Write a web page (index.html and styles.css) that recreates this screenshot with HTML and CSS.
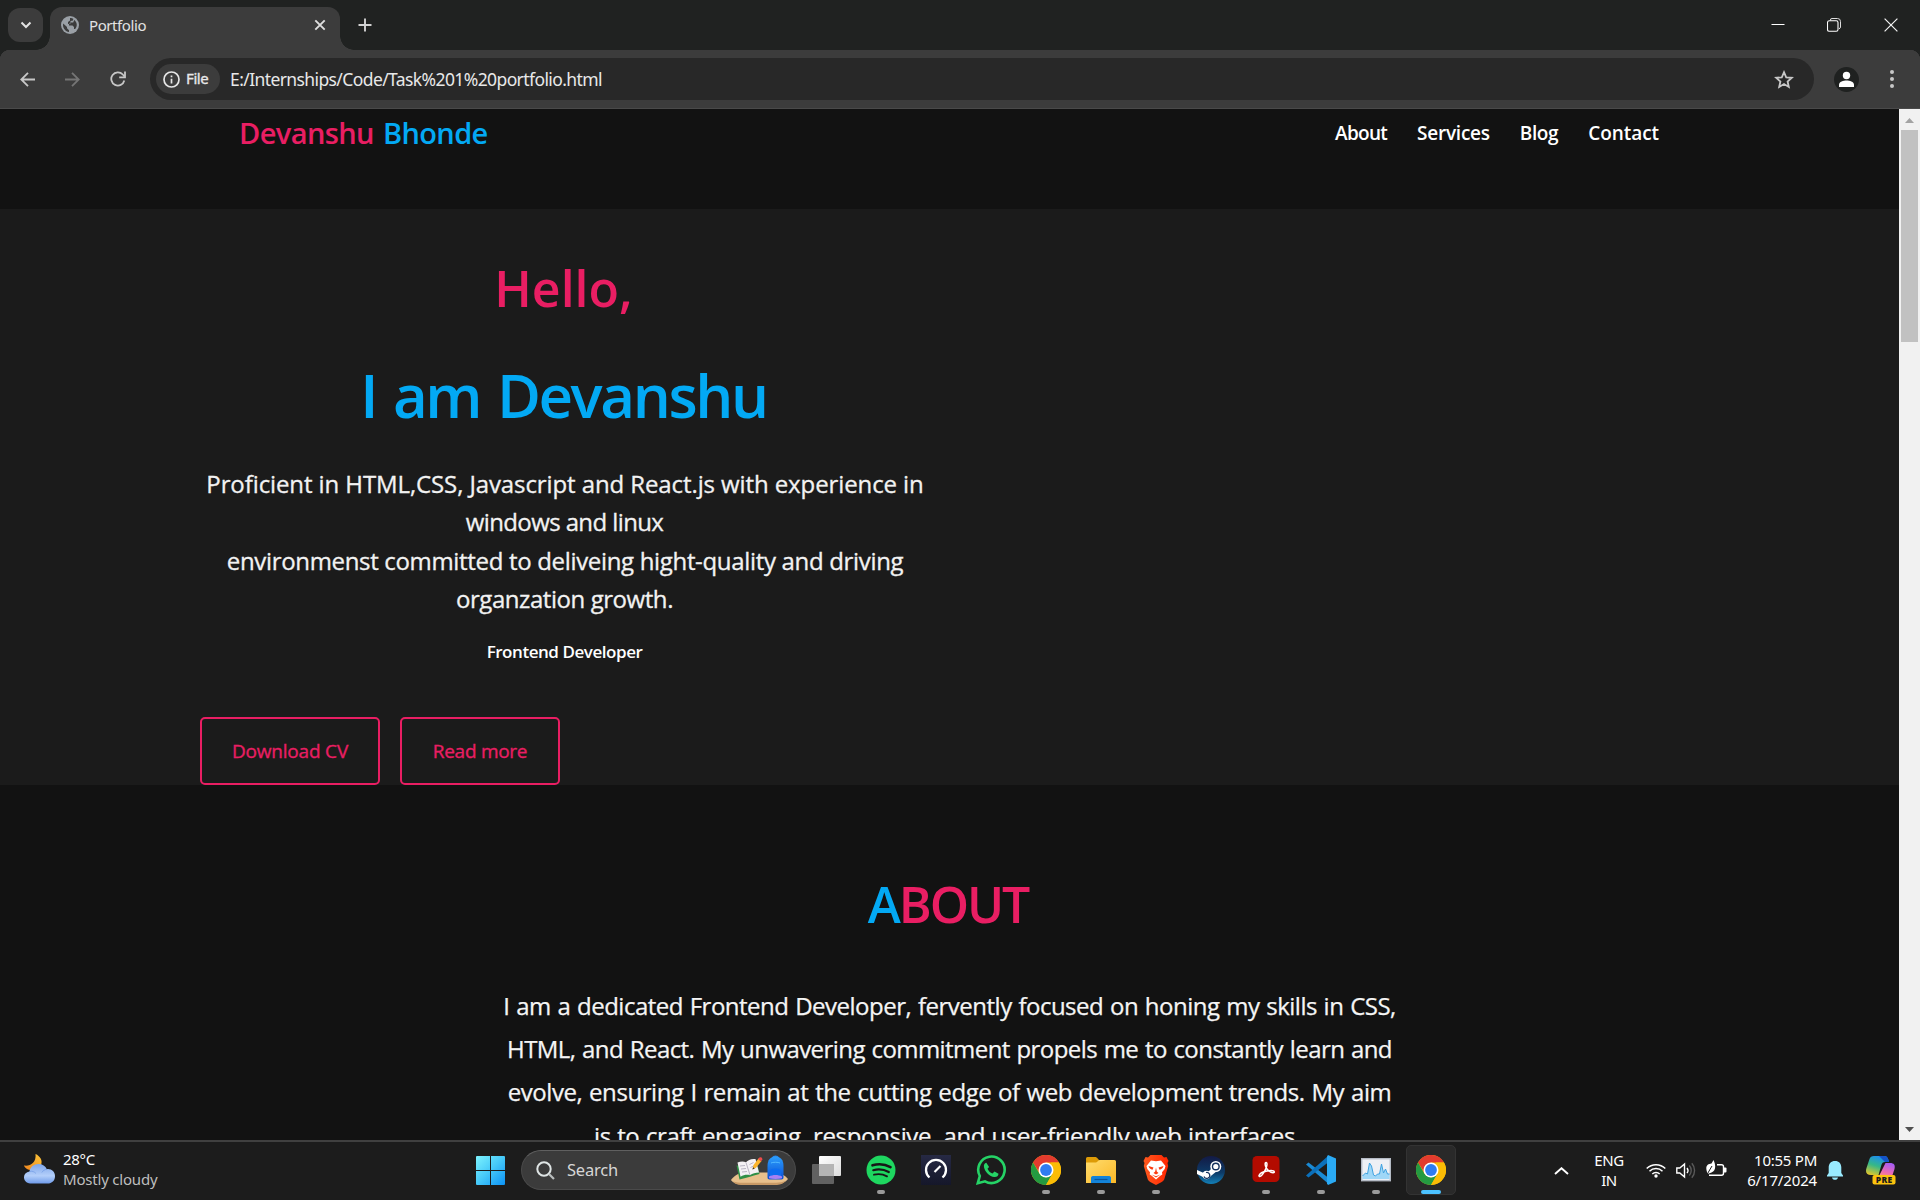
FILE: index.html
```html
<!DOCTYPE html>
<html lang="en">
<head>
<meta charset="utf-8">
<title>Portfolio</title>
<link rel="stylesheet" href="styles.css">
</head>
<body>
<div class="screen">
  <div class="tabstrip">
    <div class="tab-search"><svg width="12" height="8" viewBox="0 0 12 8"><path d="M1.500 1.500 6 6l4.500-4.500" fill="none" stroke="#e3e3e3" stroke-width="2"/></svg></div>
    <div class="tab">
      <svg class="favicon" width="18" height="18" viewBox="0 0 18 18"><circle cx="9" cy="9" r="9" fill="#9aa0a6"/><path d="M2.200 7.500 6 11v1.200l2 2v1.800C4.500 15.400 2 12.500 2 9zM9 2c1.500 0 2.500.3 3.300.8L12 4.500 9.500 5v1.800L8 8v1.500h3.500L13 11v2h1.200C17 9.500 15.800 6 13.200 4l-1 2.500H10L9 8H7V6l2-1.500z" fill="#3c3c3c"/></svg>
      <span class="tab-title">Portfolio</span>
      <svg class="tab-close" width="12" height="12" viewBox="0 0 12 12"><path d="M1.300 1.300l9.400 9.400M10.700 1.300l-9.400 9.400" stroke="#dedede" stroke-width="1.900"/></svg>
    </div>
    <svg class="new-tab" width="14" height="14" viewBox="0 0 14 14"><path d="M7 .5v13M.5 7h13" stroke="#d2d2d2" stroke-width="1.900"/></svg>
    <div class="window-controls">
      <svg width="14" height="14" viewBox="0 0 14 14"><path d="M.5 6.500h13" stroke="#fff"/></svg>
      <svg width="14" height="14" viewBox="0 0 14 14"><path d="M3.500 2.500v-.2A1.500 1.500 0 0 1 5 .5h5.500a3 3 0 0 1 3 3V9a2 2 0 0 1-1.500 1.800" fill="none" stroke="#ddd"/><rect x=".5" y="2.800" width="10.500" height="10.500" rx="1.800" fill="none" stroke="#fff" stroke-width="1.100"/></svg>
      <svg width="14" height="14" viewBox="0 0 14 14"><path d="M.6.600l12.800 12.800M13.400.6.600 13.400" stroke="#f2f2f2" stroke-width="1.200"/></svg>
    </div>
  </div>

  <div class="toolbar">
    <svg class="nav-back" width="15" height="15" viewBox="0 0 15 15"><path d="M15 7.500H1.500M8 .8 1.300 7.500 8 14.200" fill="none" stroke="#c7c7c7" stroke-width="1.800"/></svg>
    <svg class="nav-forward" width="15" height="15" viewBox="0 0 15 15"><path d="M0 7.500h13.500M7 .8l6.700 6.700L7 14.200" fill="none" stroke="#757575" stroke-width="1.800"/></svg>
    <svg class="nav-reload" width="16" height="16" viewBox="0 0 16 16"><path d="M14.300 9.500A6.600 6.600 0 1 1 12.800 3.500L14.500 5.300" fill="none" stroke="#c7c7c7" stroke-width="1.800"/><path d="M15 .4v6H9.200" fill="none" stroke="#c7c7c7" stroke-width="1.800"/></svg>
    <div class="omnibox">
      <div class="chip">
        <svg width="17" height="17" viewBox="0 0 17 17"><circle cx="8.500" cy="8.500" r="7.500" fill="none" stroke="#e6e6e6" stroke-width="1.700"/><path d="M8.500 7.700v4.800M8.500 4.400v1.800" stroke="#e6e6e6" stroke-width="1.700"/></svg>
        <span class="chip-label">File</span>
      </div>
      <span class="url">E:/Internships/Code/Task%201%20portfolio.html</span>
      <svg class="star" width="20" height="19" viewBox="0 0 20 19"><path d="M10 2.200l2.200 5.100 5.600.5-4.200 3.700 1.200 5.500L10 14.100 5.200 17l1.200-5.500L2.200 7.800l5.600-.5z" fill="none" stroke="#c7c7c7" stroke-width="1.800"/></svg>
    </div>
    <svg class="profile" width="25" height="25" viewBox="0 0 25 25"><circle cx="12.500" cy="12.500" r="12.500" fill="#1f2120"/><circle cx="12.500" cy="8.500" r="3.700" fill="#fff"/><path d="M5 20v-2.200c0-3 4.500-4.200 7.500-4.200s7.500 1.200 7.500 4.200V20z" fill="#fff"/></svg>
    <svg class="menu-dots" width="4" height="18" viewBox="0 0 4 18"><g fill="#c7c7c7"><circle cx="2" cy="2" r="2"/><circle cx="2" cy="9" r="2"/><circle cx="2" cy="16" r="2"/></g></svg>
  </div>

  <div class="viewport">
    <main class="page">
      <header class="site-header">
        <div class="logo"><span class="logo-first">Devanshu</span><span class="logo-last">Bhonde</span></div>
        <nav class="menu"><a class="m-about">About</a><a class="m-services">Services</a><a class="m-blog">Blog</a><a class="m-contact">Contact</a></nav>
      </header>
      <section class="hero">
        <div class="hero-text">
          <h2 class="hello">Hello,</h2>
          <h1 class="name">I am Devanshu</h1>
          <p class="intro">
            <span class="line i1">Proficient in HTML,CSS, Javascript and React.js with experience in</span>
            <span class="line i2">windows and linux</span>
            <span class="line i3">environmenst committed to deliveing hight-quality and driving</span>
            <span class="line i4">organzation growth.</span>
          </p>
          <p class="role">Frontend Developer</p>
        </div>
        <div class="buttons"><a class="btn btn-cv">Download CV</a><a class="btn btn-more">Read more</a></div>
      </section>
      <section class="about">
        <h2 class="about-title"><span class="about-a">A</span>BOUT</h2>
        <p class="about-text">
          <span class="line a1">I am a dedicated Frontend Developer, fervently focused on honing my skills in CSS,</span>
          <span class="line a2">HTML, and React. My unwavering commitment propels me to constantly learn and</span>
          <span class="line a3">evolve, ensuring I remain at the cutting edge of web development trends. My aim</span>
          <span class="line a4">is to craft engaging, responsive, and user-friendly web interfaces.</span>
        </p>
      </section>
    </main>
    <div class="scrollbar">
      <svg width="9" height="5" viewBox="0 0 9 5"><path d="M0 5 4.500 0 9 5z" fill="#a3a3a3"/></svg>
      <div class="thumb"></div>
      <svg class="arrow-down" width="9" height="5" viewBox="0 0 9 5"><path d="M0 0h9L4.500 5z" fill="#505050"/></svg>
    </div>
  </div>

  <div class="taskbar">
    <div class="weather">
      <svg width="31" height="30" viewBox="0 0 31 30">
        <defs>
          <linearGradient id="moon" x1="1" y1="0" x2="0" y2="1"><stop offset="0" stop-color="#fcc63a"/><stop offset="1" stop-color="#f0851e"/></linearGradient>
          <linearGradient id="cloud" x1="0" y1="0" x2="0" y2="1"><stop offset="0" stop-color="#7ea6ea"/><stop offset=".6" stop-color="#b3cffa"/><stop offset="1" stop-color="#6f9bea"/></linearGradient>
        </defs>
        <path d="M11.500 0C16 2 19 6.500 17 11c-2 4.500-8 6.500-13 4.500-2-.8-3.500-2.300-4-4C6 12.500 12.500 9 11.500 0z" fill="url(#moon)"/>
        <path d="M6.500 29.500a6 6 0 0 1-1-12C6 13 10 10 14.500 10c4 0 7 2 8.300 5.200 4.500-.7 8.200 2.300 8.200 7 0 4.300-3 7.300-7.500 7.300z" fill="url(#cloud)"/>
        <path d="M5.500 17.500c2.500-.8 5 .3 6.500 2M22.800 15.200c-2 .3-4 1.500-5 3.300" fill="none" stroke="#5f8ee0" stroke-opacity=".5"/>
      </svg>
      <div class="weather-text"><span class="temp">28°C</span><span class="cond">Mostly cloudy</span></div>
    </div>
    <svg class="start" width="29" height="29" viewBox="0 0 29 29">
      <defs><linearGradient id="win" x1="0" y1="0" x2="1" y2="1"><stop offset="0" stop-color="#7df3fd"/><stop offset=".5" stop-color="#45c8f9"/><stop offset="1" stop-color="#0c92f5"/></linearGradient></defs>
      <path d="M1 0h13v14H0V1a1 1 0 0 1 1-1zM15 0h13a1 1 0 0 1 1 1v13H15zM0 15h14v14H1a1 1 0 0 1-1-1zM15 15h14v13a1 1 0 0 1-1 1H15z" fill="url(#win)"/>
    </svg>
    <div class="search">
      <svg width="19" height="19" viewBox="0 0 19 19"><circle cx="8" cy="8" r="6.700" fill="none" stroke="#dfe5e5" stroke-width="2"/><path d="M13 13l5 5" stroke="#b9bdbd" stroke-width="2.200"/></svg>
      <span class="search-label">Search</span>
      <svg class="search-art" width="57" height="31" viewBox="0 0 57 31">
        <defs><linearGradient id="bag" x1="0" y1="0" x2="0" y2="1"><stop offset="0" stop-color="#2b9dfb"/><stop offset="1" stop-color="#0b4fd6"/></linearGradient></defs>
        <path d="M0 26c3-4 7-7 13-7.500h30c7 0 11 3 14 6.500-2 3-6 4.500-11 5H9c-5 0-7-1.500-9-4z" fill="#e8c08c"/>
        <path d="M2 27.500c3 1 6 1.300 10 1.300h33c4 0 7-.8 10-2-2 2.200-5 4.200-9 4.200H10c-4 0-6-1.500-8-3.500z" fill="#c99a66"/>
        <path d="M5.500 11.500 8.500 25.500c7-1.500 12-3.500 20-5.500L27 13z" fill="#2f8f46"/>
        <path d="M6.500 8.500c3-1.300 6-1.500 8.500-.3 2-2.300 5-3.700 9.500-3.200l3.500 13.500c-3.500 0-6.500 1-9 2.700-3-1-6-.5-9.500 1.500z" fill="#f3f1f4"/>
        <path d="M15 8.500 19 21M9 12l5-.5M10 15l5-.5M11 18l5-.5M18.500 10.500l4-2M19.500 13.500l4-2" stroke="#a9a4b6" stroke-width=".8" fill="none"/>
        <path d="M21.500 15.500 22.500 11l5-6.500 3 2.500-5.500 6.800z" fill="#fbb52b"/><path d="M27 5l1.800-1.800a2 2 0 0 1 2.500 2L30 7.500z" fill="#ee4b4b"/><path d="M21.500 15.500l.5-2.300 1.800 1.300z" fill="#333"/>
        <path d="M41.500 4a3.500 3.500 0 0 1 6 0" fill="none" stroke="#2a87e8" stroke-width="1.800"/>
        <path d="M36.500 12c0-6 3-9.500 8-9.500s8 3.500 8 9.500v11.500c0 1.200-.8 2-2 2h-12c-1.200 0-2-.8-2-2z" fill="url(#bag)"/>
        <path d="M39 24.500V18c0-2.500 2-3.500 5.500-3.500S50 15.500 50 18v6.500z" fill="#0d6df0"/><path d="M38 22.500c4-2 9-2 13 0v1.800c-4 1-9 1-13 0z" fill="#a781f3"/><path d="M40 9c1.500-1 7.500-1 9 0" stroke="#53b9ff" fill="none"/>
      </svg>
    </div>

    <div class="apps">
      <div class="app"><svg width="30" height="30" viewBox="0 0 30 30"><defs><linearGradient id="tv" x1="0" y1="0" x2="1" y2="1"><stop offset="0" stop-color="#fff"/><stop offset="1" stop-color="#dcdcdc"/></linearGradient></defs><rect x="8" y="1" width="22" height="20" rx="1" fill="url(#tv)"/><rect x="1" y="9" width="22" height="20" rx="1" fill="#6d6d6d" fill-opacity=".85"/><path d="M8 9h15v12H8z" fill="#b4b4b4"/></svg></div>
      <div class="app running"><svg width="30" height="30" viewBox="0 0 30 30"><circle cx="15" cy="15" r="14.500" fill="#1ed760"/><g fill="none" stroke="#171717" stroke-linecap="round"><path d="M6.500 10.300c6-1.700 12.500-1.200 18 1.800" stroke-width="2.600"/><path d="M7.300 15.200c5-1.400 10.700-.8 15.500 1.800" stroke-width="2.200"/><path d="M8 19.700c4.500-1.100 9-.6 13 1.600" stroke-width="1.900"/></g></svg></div>
      <div class="app"><svg width="30" height="30" viewBox="0 0 30 30"><defs><linearGradient id="spd" x1="0" y1="0" x2="0" y2="1"><stop offset="0" stop-color="#262944"/><stop offset="1" stop-color="#15172a"/></linearGradient></defs><path d="M0 0h30v30H0z" fill="url(#spd)"/><path d="M8.500 22.500a10 10 0 1 1 13 0" fill="none" stroke="#fff" stroke-width="2.300"/><path d="M13.500 17 19.500 11" stroke="#fff" stroke-width="2.200"/></svg></div>
      <div class="app"><svg width="30" height="30" viewBox="0 0 30 30"><path d="M1.800 28.200l2-7.200A13.200 13.200 0 1 1 9 26.300z" fill="none" stroke="#25d366" stroke-width="2.600"/><path d="M10.300 7.800c-1.800.3-2.800 2.200-2.300 4.400 1 4.700 5.600 9.200 10.300 9.800 2.300.2 4.200-1 4.200-3.200l-4-2.200-2 2c-2.300-.9-4-2.600-5-4.800l1.600-1.800z" fill="#25d366"/></svg></div>
      <div class="app running"><svg width="30" height="30" viewBox="0 0 30 30"><use href="#chrome"/></svg></div>
      <div class="app running"><svg width="30" height="30" viewBox="0 0 30 30"><defs><linearGradient id="fold" x1="0" y1="0" x2="1" y2="1"><stop offset="0" stop-color="#ffdc6e"/><stop offset="1" stop-color="#fbb826"/></linearGradient></defs><path d="M0 3.500A1.500 1.500 0 0 1 1.500 2H9c1 0 1.500.3 2 .8L13 5v6H0z" fill="#dd9b07"/><path d="M0 7.500h10c1.500 0 2-2.500 3.500-2.500h15A1.500 1.500 0 0 1 30 6.500V28H0z" fill="url(#fold)"/><path d="M5 28v-5.500A1.800 1.800 0 0 1 6.800 21h16.500a1.800 1.800 0 0 1 1.700 1.500V28z" fill="#1383d9"/><path d="M8.500 24.500h13" stroke="#0a559c" stroke-width="1.200"/></svg></div>
      <div class="app running"><svg width="30" height="30" viewBox="0 0 30 30"><defs><linearGradient id="brv" x1="0" y1="0" x2="1" y2="0"><stop offset="0" stop-color="#ff5a1f"/><stop offset="1" stop-color="#ff2400"/></linearGradient></defs><path d="M9.500 0h11l2.500 2.500 2.500-.5 2 4-1 2 .7 3-4 13.500c-1 2-4 3.500-8.200 5.500-4.200-2-7.200-3.500-8.200-5.500L2.800 11l.7-3-1-2 2-4 2.500.5z" fill="url(#brv)"/><path d="M10 5.500l5 .8 5-.8 4.500 5.500-.8 3-2.700 3.300.3 2.200-2 1.200L15 24.500l-4.300-3.800-2-1.200.3-2.200L6.300 14l-.8-3z" fill="#fff"/><path d="M7.500 11l5 1.500-1 2.300c-2-.3-3.300-1.800-4-3.800zM22.500 11l-5 1.500 1 2.300c2-.3 3.300-1.800 4-3.800zM15 12.500l.8 4 1.700 1.500-2.500 1.500-2.500-1.500 1.700-1.500zM10.500 19.500l4.500 1.700 4.500-1.700L15 22.500z" fill="#fb3c10"/></svg></div>
      <div class="app"><svg width="30" height="30" viewBox="0 0 30 30"><defs><linearGradient id="stm" x1="0" y1="0" x2="0" y2="1"><stop offset="0" stop-color="#131a45"/><stop offset=".6" stop-color="#0d3b68"/><stop offset="1" stop-color="#1380b8"/></linearGradient></defs><circle cx="15" cy="15" r="14" fill="url(#stm)"/><path d="M1 15l9 4 6-6 5 3-8 6.500-4 .5-8-4z" fill="#fff"/><circle cx="19.800" cy="11.500" r="5.500" fill="#fff"/><circle cx="19.800" cy="11.500" r="3.300" fill="#fff" stroke="#16325e" stroke-width="1.400"/><circle cx="10.500" cy="20" r="4.200" fill="#fff"/><path d="M8 21.500a3 3 0 1 0 2-4" fill="none" stroke="#16325e" stroke-width="1.200"/></svg></div>
      <div class="app running"><svg width="30" height="30" viewBox="0 0 30 30"><rect x="1.500" y="1" width="27" height="26" rx="4.500" fill="#b30b00"/><path d="M8 20.500c.8-2 4-3.800 8-4.500s7-.3 7.300.8c.3 1-1.800 1.500-4.300-.2-3-2-5-5.500-4.800-8 .1-1.800 1.800-1.500 1.800.3 0 2.700-2 7-4.500 10.500-1.500 2-3.500 2.800-3.500 1.100z" fill="none" stroke="#fff" stroke-width="1.500"/></svg></div>
      <div class="app running"><svg width="30" height="30" viewBox="0 0 30 30"><path d="M0 9.500 2.500 7.500 22 22.500v6z" fill="#1a8ad4"/><path d="M0 20.500l2.500 2L22 7.500V1z" fill="#0b70bb"/><path d="M22 0l8 3.500v23L22 30l-1-1.500V1.500z" fill="#2aaaf4"/></svg></div>
      <div class="app running"><svg width="30" height="30" viewBox="0 0 30 30"><rect x=".7" y="3.700" width="28.600" height="22" fill="#eef0f5" stroke="#b4bac4" stroke-width="1.400"/><path d="M1.500 21l3-3 2 1 2-11 2 3 2 9 2 1 2-2h2l2-10 2 9 2-4 2 5h2v5h-27z" fill="#9fd7f7"/><path d="M1.500 21l3-3 2 1 2-11 2 3 2 9 2 1 2-2h2l2-10 2 9 2-4 2 5h2" fill="none" stroke="#3fa2e0"/></svg></div>
      <div class="app active"><svg width="30" height="30" viewBox="0 0 30 30"><g id="chrome"><circle cx="15" cy="15" r="15" fill="#fbbc05"/><path d="M2 7.500A15 15 0 0 1 28 7.500H15L9 18.500z" fill="#e33b2e"/><path d="M2 7.500A15 15 0 0 0 15 30l6.500-11.200-6.500 3.700-6.500-3.700z" fill="#249a41"/><path d="M28 7.500A15 15 0 0 1 15 30l6.500-11.200L20 7.500z" fill="#fbbc05"/><circle cx="15" cy="15" r="7.500" fill="#fff"/><circle cx="15" cy="15" r="5.900" fill="#2f7cf0"/></g></svg></div>
    </div>

    <div class="tray">
      <svg class="t-chev" width="15" height="8" viewBox="0 0 15 8"><path d="M1 7l6.500-5.800L14 7" fill="none" stroke="#fff" stroke-width="1.900"/></svg>
      <div class="lang"><span class="t-eng">ENG</span><span class="t-in">IN</span></div>
      <svg class="t-wifi" width="20" height="15" viewBox="0 0 20 15"><g fill="none" stroke="#fff" stroke-width="1.500"><path d="M.7 5.500a13.200 13.200 0 0 1 18.600 0"/><path d="M3.500 8.300a9.200 9.200 0 0 1 13 0"/><path d="M6.300 11a5.200 5.200 0 0 1 7.400 0"/></g><circle cx="10" cy="13" r="1.700" fill="#fff"/></svg>
      <svg class="t-vol" width="20" height="17" viewBox="0 0 20 17"><path d="M.8 6v5h3l4.700 4V2L3.800 6z" fill="none" stroke="#fff" stroke-width="1.400"/><path d="M11 6a4 4 0 0 1 0 5" fill="none" stroke="#fff" stroke-width="1.400"/><path d="M13.300 3.500a7.500 7.500 0 0 1 0 10M15.800 1.200a11 11 0 0 1 0 14.600" fill="none" stroke="#5a5a5a" stroke-width="1.400"/></svg>
      <svg class="t-bat" width="21" height="18" viewBox="0 0 21 18"><path d="M11 4.700h4.500a2 2 0 0 1 2 2v6.600a2 2 0 0 1-2 2H3" fill="none" stroke="#fff" stroke-width="1.400"/><path d="M18 7.500h1.500a1 1 0 0 1 1 1v3a1 1 0 0 1-1 1H18z" fill="#fff"/><path d="M1 12C-1 6 1.500 4 5.500 3.500L7.500 0c2.500 5 2.500 11-2 12.500L1.500 14z" fill="#fff"/><path d="M1 14.500 6 6" stroke="#1c1c1c"/></svg>
      <div class="clock"><span class="t-time">10:55 PM</span><span class="t-date">6/17/2024</span></div>
      <svg class="t-bell" width="16" height="19" viewBox="0 0 16 19"><path d="M8 0c4 0 6.300 2.700 6.300 6.500V12l1.700 2.500v1H0v-1L1.700 12V6.500C1.700 2.700 4 0 8 0zM5 16.500h6c-.3 1.500-1.500 2.300-3 2.300s-2.700-.8-3-2.300z" fill="#99ebff"/></svg>
      <svg class="t-copilot" width="30" height="29" viewBox="0 0 30 29">
        <defs>
          <linearGradient id="cpa" x1=".6" y1="0" x2=".2" y2="1"><stop offset="0" stop-color="#1b8cf2"/><stop offset=".5" stop-color="#35b888"/><stop offset="1" stop-color="#e3c72b"/></linearGradient>
          <linearGradient id="cpb" x1=".7" y1="0" x2=".3" y2="1"><stop offset="0" stop-color="#a55cf5"/><stop offset=".6" stop-color="#ee6bb0"/><stop offset="1" stop-color="#ff9a6b"/></linearGradient>
        </defs>
        <path d="M8 0h10c2.500 0 3.500 1 4.300 3.500L23 6h-4c-2 0-3 1-3.600 3L12.500 19H5c-4 0-6-2-4.500-7L3.500 3C4.200 1 5.500 0 8 0z" fill="url(#cpa)"/>
        <path d="M13 0h5c2.500 0 3.500 1 4.300 3.500L23 6h-4l-2-2z" fill="#1453c8"/>
        <path d="M19.500 7H24c4 0 5.500 2 4.500 6l-3 9H10l3-2z" fill="url(#cpb)"/>
        <rect x="6.500" y="19" width="23" height="9.500" rx="2" fill="#fcc30e"/>
        <text x="18.100" y="26.800" text-anchor="middle" class="pre">PRE</text>
      </svg>
    </div>
  </div>
</div>
</body>
</html>
```
FILE: styles.css
```css
* { box-sizing: border-box; margin: 0; padding: 0; }
body { background: #1c1c1c; overflow: hidden; }
svg { display: block; flex: none; }
.screen { width: 1920px; height: 1200px; display: flex; flex-direction: column; font-family: "Noto Sans", sans-serif; }

/* browser tab strip */
.tabstrip { height: 50px; background: #202221; display: flex; align-items: flex-start; padding: 7px 22px 0 8px; }
.tab-search { width: 35px; height: 34px; margin-top: 1px; border-radius: 12px; background: #3c3c3c; display: flex; align-items: center; justify-content: center; }
.tab { position: relative; width: 290px; height: 43px; margin-left: 7px; background: #3c3c3c; border-radius: 12px 12px 0 0; display: flex; align-items: center; padding: 0 14px 7px 11px; }
.tab::before, .tab::after { content: ""; position: absolute; bottom: 0; width: 14px; height: 14px; }
.tab::before { left: -14px; background: radial-gradient(circle at 0 0, transparent 13.500px, #3c3c3c 14px); }
.tab::after { right: -14px; background: radial-gradient(circle at 100% 0, transparent 13.500px, #3c3c3c 14px); }
.tab-title { margin-left: 10px; font-size: 15px; line-height: 24px; letter-spacing: -0.420px; color: #e3e3e3; }
.tab-close { margin-left: auto; }
.new-tab { margin: 11px 0 0 18px; }
.window-controls { margin-left: auto; display: flex; gap: 43px; padding-top: 11px; }
.window-controls svg:first-child { margin-right: -1px; }

/* browser toolbar */
.toolbar {
  height: 59px;
  background:
    radial-gradient(circle at 10px 10px, #3c3c3c 10px, #202221 10.500px) 0 0 / 10px 10px no-repeat,
    radial-gradient(circle at 0 10px, #3c3c3c 10px, #202221 10.500px) 100% 0 / 10px 10px no-repeat,
    #3c3c3c;
  border-bottom: 1px solid #4a4a4a;
  display: flex; align-items: center; padding: 0 26px 0 20px;
}
.nav-forward { margin-left: 30px; }
.nav-reload { margin-left: 30px; }
.omnibox { width: 1665px; height: 42px; margin-left: 24px; border-radius: 21px; background: #282828; display: flex; align-items: center; padding: 0 20px 0 6px; }
.chip { width: 64px; height: 30px; border-radius: 15px; background: #3c3c3c; display: flex; align-items: center; padding-left: 7px; gap: 6px; }
.chip-label { font-size: 15px; letter-spacing: -0.400px; color: #e8e8e8; line-height: 28px; margin-top: -2px; -webkit-text-stroke: 0.350px #e8e8e8; }
.url { margin-left: 10px; font-size: 17.500px; letter-spacing: -0.600px; color: #e8e8e8; white-space: nowrap; line-height: 26px; }
.star { margin-left: auto; }
.profile { margin-left: 20px; }
.menu-dots { margin-left: 31px; }

/* page area */
.viewport { height: 1031px; display: flex; overflow: hidden; }
.page { width: 1899px; height: 1031px; overflow: hidden; background: #121212; font-family: "Open Sans", sans-serif; }
.scrollbar { width: 21px; background: #f1f1f1; display: flex; flex-direction: column; align-items: center; padding: 9px 0 8px; }
.thumb { width: 17px; height: 212px; margin-top: 7px; background: #c1c1c1; }
.arrow-down { margin-top: auto; }

.site-header { height: 100px; display: flex; justify-content: space-between; padding: 1px 240px 0 239px; font-weight: 600; }
.logo { display: flex; gap: 9px; font-size: 29px; line-height: 46px; letter-spacing: -0.600px; }
.logo-first { color: #e91e63; }
.logo-last { color: #03a9f4; }
.menu { display: flex; gap: 30px; font-size: 19px; line-height: 47px; color: #fff; }
.m-about { letter-spacing: -0.700px; }
.m-services { letter-spacing: -0.250px; }
.m-blog { letter-spacing: -0.400px; }
.m-contact { letter-spacing: -0.050px; }

.hero { height: 576px; background: #1b1b1b; padding: 41px 0 0 200px; }
.hero-text { width: 730px; text-align: center; }
.hello { padding-right: 3px; font-size: 50px; font-weight: 600; line-height: 77px; letter-spacing: 0; color: #e91e63; }
.name { margin-top: 20px; padding-right: 3px; font-size: 60px; font-weight: 600; line-height: 97px; letter-spacing: -2.400px; word-spacing: 3.500px; color: #03a9f4; }
.line { display: block; white-space: nowrap; }
.intro { margin-top: 21px; font-size: 24px; line-height: 38.400px; color: #f2f2f2; -webkit-text-stroke: 0.300px #f2f2f2; }
.i1 { letter-spacing: -0.100px; }
.i2 { letter-spacing: -0.600px; padding-right: 1px; }
.i3 { letter-spacing: -0.330px; }
.i4 { letter-spacing: -0.440px; padding-right: 1px; }
.role { margin-top: 18px; font-size: 17px; font-weight: 600; line-height: 30px; letter-spacing: -0.450px; color: #fff; padding-right: 1px; }
.buttons { display: flex; gap: 20px; margin-top: 50px; }
.btn { height: 68px; border: 2px solid #e91e63; border-radius: 5px; color: #e91e63; font-size: 19px; line-height: 65px; text-align: center; -webkit-text-stroke: 0.350px #e91e63; }
.btn-cv { width: 180px; letter-spacing: -0.200px; }
.btn-more { width: 160px; letter-spacing: -0.280px; }

.about { padding-top: 81px; text-align: center; }
.about-title { font-size: 50px; font-weight: 600; line-height: 77px; letter-spacing: -2.100px; color: #e91e63; padding-right: 3px; }
.about-a { color: #03a9f4; }
.about-text { margin-top: 41px; font-size: 24px; line-height: 43.200px; color: #f5f5f5; -webkit-text-stroke: 0.250px #f5f5f5; }
.a1 { letter-spacing: -0.500px; word-spacing: 1px; }
.a2 { letter-spacing: -0.570px; word-spacing: 1px; }
.a3 { letter-spacing: -0.430px; word-spacing: 1px; }
.a4 { letter-spacing: -0.330px; word-spacing: 0.500px; padding-right: 4px; }

/* taskbar */
.taskbar { position: relative; height: 60px; background: #1c1c1c; border-top: 2px solid #404040; display: flex; align-items: center; color: #fff; font-size: 15px; line-height: 20px; }
.weather { width: 476px; display: flex; align-items: center; gap: 8px; padding: 0 0 0 24px; }
.weather svg { margin-top: -4px; }
.weather-text, .lang, .clock { display: flex; flex-direction: column; }
.weather-text { margin-top: -5px; }
.lang, .clock { margin-top: -3px; }
.temp { letter-spacing: -0.300px; }
.cond { letter-spacing: -0.200px; color: #bebebe; }
.start { margin-top: -1px; }
.search { width: 275px; height: 40px; margin: -2px 0 0 16px; border-radius: 20px; background: #3b3b3b; border: 1px solid #4a4a4a; border-top-color: #606060; display: flex; align-items: center; padding: 0 7px 0 14px; }
.search-label { margin: 0 0 0 12px; font-size: 16.500px; letter-spacing: -0.200px; color: #d6d6d6; line-height: 26px; }
.search-art { margin-left: auto; margin-top: -2px; }
.apps { display: flex; gap: 5px; margin: -2px 0 0 5px; }
.app { position: relative; width: 50px; height: 50px; display: flex; align-items: center; justify-content: center; border-radius: 5px; }
.app.running::after, .app.active::after { content: ""; position: absolute; left: 21px; bottom: 1px; width: 8px; height: 4px; border-radius: 2px; background: #9a9a9a; }
.app.active { background: #292929; border: 1px solid #333; }
.app.active::after { left: 14px; bottom: 0; width: 20px; background: #4cc2ff; }
.tray { margin-left: 98px; display: flex; align-items: center; }
.lang { width: 34px; margin-left: 23px; align-items: center; }
.t-eng { letter-spacing: -0.400px; }
.t-in { letter-spacing: -0.400px; }
.t-wifi { margin-left: 20px; margin-top: -2px; }
.t-vol { margin-left: 10px; margin-top: -2px; }
.t-bat { margin-left: 10px; margin-top: -4px; }
.clock { width: 80px; margin-left: 10px; align-items: flex-end; }
.t-time { letter-spacing: -0.250px; }
.t-date { letter-spacing: -0.150px; }
.t-bell { margin-left: 10px; margin-top: -1px; }
.t-copilot { margin-left: 23px; margin-top: -1px; }
.pre { font: 800 8.500px "Open Sans", sans-serif; fill: #1c1c1c; letter-spacing: 0.300px; }
```
